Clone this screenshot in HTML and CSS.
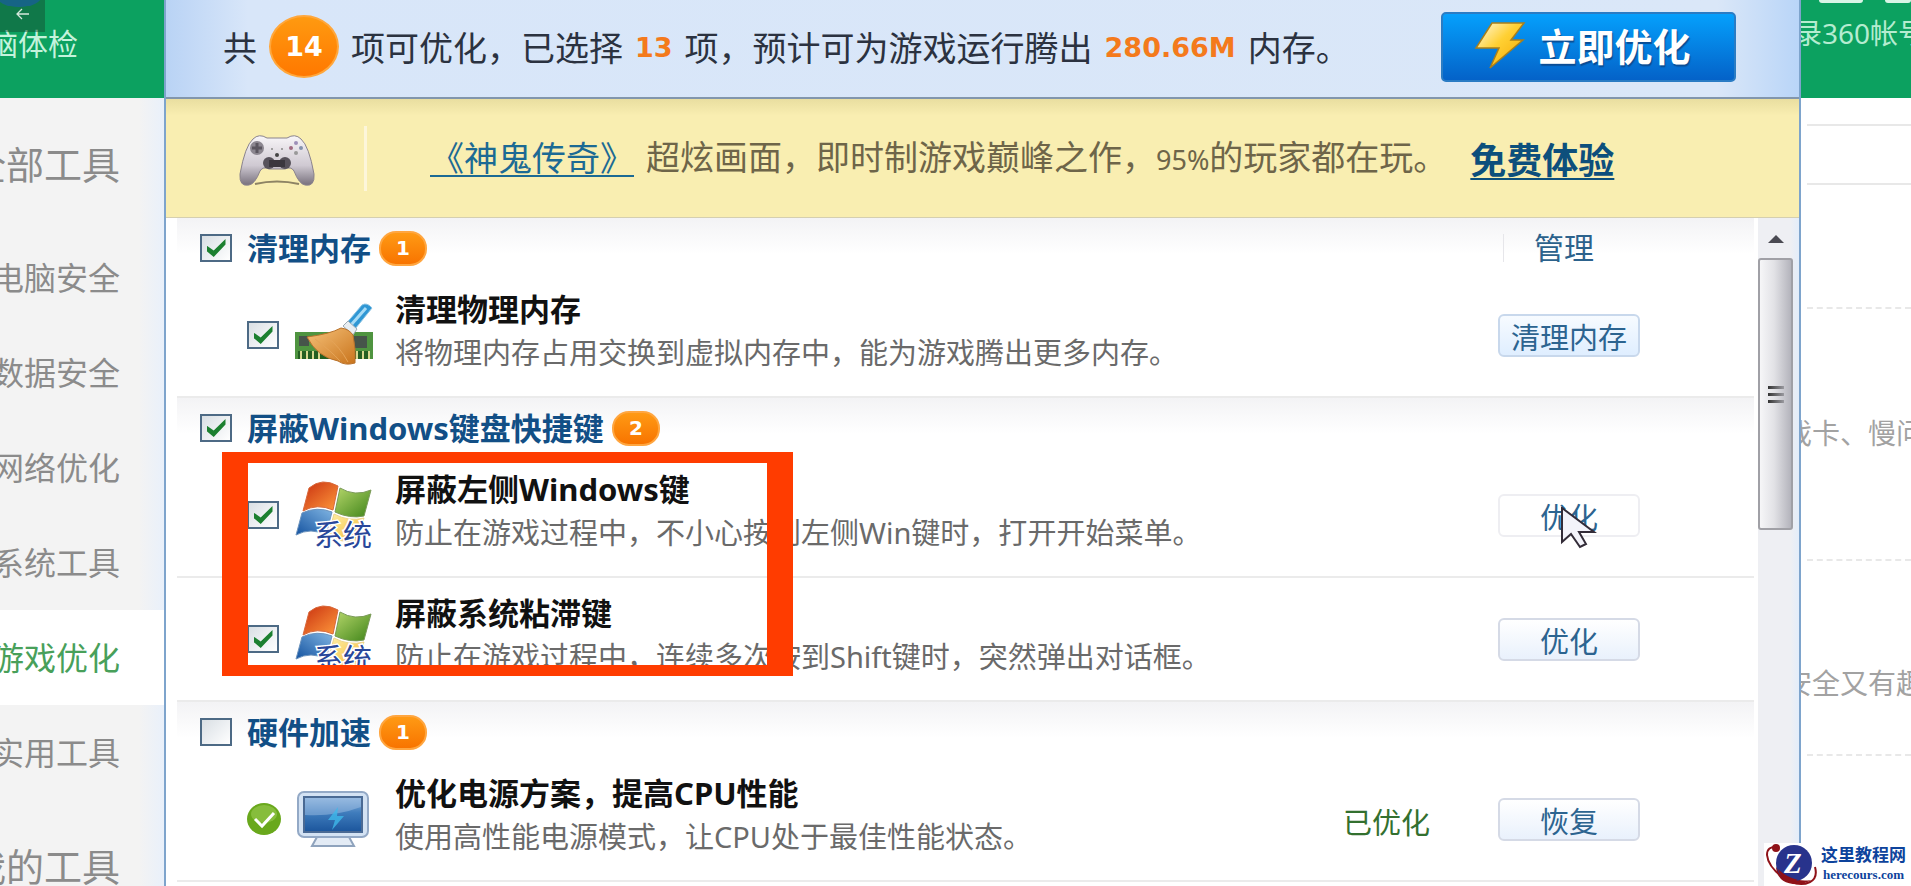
FILE: index.html
```html
<!DOCTYPE html>
<html lang="zh-CN">
<head>
    <meta charset="UTF-8">
    <meta name="viewport" content="width=device-width, initial-scale=1.0">
    <title>游戏优化</title>
    <link rel="stylesheet" href="styles.css">
</head>
<body>
    <!-- Shared icon shapes -->
    <svg class="defs" aria-hidden="true">
        <defs>
            <linearGradient id="flag-red" x1="0" y1="0" x2="1" y2="1"><stop offset="0" stop-color="#c93010"/><stop offset="1" stop-color="#ff9a3c"/></linearGradient>
            <linearGradient id="flag-green" x1="0" y1="0" x2="1" y2="1"><stop offset="0" stop-color="#b5d66a"/><stop offset="1" stop-color="#3f8419"/></linearGradient>
            <linearGradient id="flag-blue" x1="1" y1="0" x2="0" y2="1"><stop offset="0" stop-color="#7fb4e2"/><stop offset="1" stop-color="#1553a0"/></linearGradient>
            <linearGradient id="flag-yellow" x1="0" y1="0" x2="1" y2="1"><stop offset="0" stop-color="#fff0a8"/><stop offset="1" stop-color="#f2b833"/></linearGradient>
            <linearGradient id="pad" x1="0" y1="0" x2="0" y2="1"><stop offset="0" stop-color="#f8f6f8"/><stop offset=".6" stop-color="#cfc9d2"/><stop offset="1" stop-color="#77707c"/></linearGradient>
            <linearGradient id="bolt" x1="0" y1="0" x2="1" y2="1"><stop offset="0" stop-color="#fffbe8"/><stop offset=".45" stop-color="#ffd033"/><stop offset="1" stop-color="#f5a800"/></linearGradient>
            <linearGradient id="broom" x1="0" y1="0" x2="1" y2="1"><stop offset="0" stop-color="#f6c27a"/><stop offset="1" stop-color="#c9741c"/></linearGradient>
            <linearGradient id="screen" x1="0" y1="0" x2="0" y2="1"><stop offset="0" stop-color="#8db4de"/><stop offset=".45" stop-color="#3f7cbc"/><stop offset="1" stop-color="#1b559c"/></linearGradient>
        </defs>
        <symbol id="windows" viewBox="0 0 78 68">
            <path d="M14 7Q27-4 43 5L38 29Q22 22 8 30Z" fill="url(#flag-red)" stroke="#d8693c"/>
            <path d="M45 7Q60 16 76 9L69 35Q55 38 40 31Z" fill="url(#flag-green)" stroke="#7a9a58"/>
            <path d="M7 32Q22 25 37 31L31 54Q16 46 1 54Z" fill="url(#flag-blue)" stroke="#6c93bd"/>
            <path d="M39 33Q54 41 69 37L62 60Q46 62 33 55Z" fill="url(#flag-yellow)" stroke="#ecd48c"/>
            <text x="19" y="65" class="icon-text">系统</text>
        </symbol>
    </svg>

    <aside class="sidebar">
        <div class="sidebar-head">电脑体检</div>
        <nav class="tools">
            <a class="tool tool-main" href="#">全部工具</a>
            <a class="tool" href="#">电脑安全</a>
            <a class="tool" href="#">数据安全</a>
            <a class="tool" href="#">网络优化</a>
            <a class="tool" href="#">系统工具</a>
            <a class="tool active" href="#">游戏优化</a>
            <a class="tool" href="#">实用工具</a>
            <a class="tool tool-main" href="#">我的工具</a>
        </nav>
        <div class="blue-dot"></div>
        <button class="back" aria-label="返回">
            <svg width="14" height="14" viewBox="0 0 14 14" fill="none" stroke="#d5e8dc" stroke-width="1.3"><path d="M13 7H1M6 2L1 7l5 5"/></svg>
        </button>
    </aside>

    <main class="dialog">
        <header class="summary">
            <span>共</span>
            <b class="total">14</b>
            <span>项可优化，已选择</span>
            <b class="num">13</b>
            <span>项，预计可为游戏运行腾出</span>
            <b class="num">280.66M</b>
            <span>内存。</span>
            <button class="optimize">
                <svg width="52" height="48" viewBox="0 0 52 48"><path d="M18 2h32L37 19h12L16 47l9-20H2Z" fill="url(#bolt)" stroke="#a87f1c" stroke-width="1.5"/></svg>
                立即优化
            </button>
        </header>

        <div class="promo">
            <svg class="pad" width="76" height="54" viewBox="0 0 76 54">
                <path d="M14 5Q20-1 28 4H48Q56-1 62 5Q70 12 75 40Q76 53 66 51Q60 50 55 37Q52 32 46 35H30Q24 32 21 37Q16 50 10 51Q0 53 1 40Q6 12 14 5Z" fill="url(#pad)" stroke="#8a838c"/>
                <path d="M16 50Q38 45 60 50" fill="none" stroke="#8d8364" stroke-width="2"/>
                <circle cx="18" cy="14" r="7" fill="#8c8790"/><path d="M18 9v10M13 14h10" stroke="#5b565f" stroke-width="3"/>
                <circle cx="57" cy="9" r="2" fill="#9d8fb8"/><circle cx="52" cy="14" r="2" fill="#a06a80"/><circle cx="62" cy="14" r="2" fill="#8391ab"/><circle cx="57" cy="19" r="2" fill="#999"/>
                <circle cx="33" cy="15" r="1" fill="#888"/><circle cx="43" cy="15" r="1" fill="#888"/><circle cx="38" cy="21" r="2" fill="#444"/>
                <circle cx="30" cy="29" r="6" fill="#57525b"/><circle cx="46" cy="29" r="6" fill="#57525b"/><path d="M30 26h16v7H30z" fill="#3b373e"/>
            </svg>
            <p class="promo-text"><a href="#">《神鬼传奇》</a><span>超炫画面，即时制游戏巅峰之作，<span class="percent">95%</span>的玩家都在玩。</span></p>
            <a class="try" href="#">免费体验</a>
        </div>

        <div class="content">
            <div class="list">
                <section class="group">
                    <div class="group-head">
                        <input type="checkbox" id="g1" checked>
                        <label for="g1">清理内存</label>
                        <b class="count">1</b>
                        <a class="manage" href="#">管理</a>
                    </div>
                    <div class="item">
                        <input type="checkbox" id="i1" checked>
                        <svg class="icon" width="78" height="68" viewBox="0 0 78 68">
                            <path d="M0 31h78v27H0z" fill="#4f9440"/>
                            <path d="M4 35h10v10H4zM56 35h16v12H56z" fill="#46544a"/>
                            <path d="M3 50h72v8H3z" fill="#245f22"/>
                            <path d="M6 50v8M12 50v8M18 50v8M24 50v8M62 50v8M68 50v8M74 50v8" stroke="#d8d890" stroke-width="2"/>
                            <path d="M50 24L67 4Q72 1 77 7L60 28Z" fill="#2f97d4" stroke="#8cc4e4"/>
                            <path d="M56 24L71 7" stroke="#a8dcf6" stroke-width="3"/>
                            <path d="M48 25l5-5 9 8-4 6Z" fill="#e8eef2" stroke="#9ba9b4"/>
                            <path d="M12 36Q35 33 46 27Q54 28 58 34Q61 48 60 62Q50 65 43 60Q22 56 12 36Z" fill="url(#broom)" stroke="#b8722c"/>
                            <path d="M20 38Q36 50 45 60M32 36Q45 46 53 61" fill="none" stroke="#e5a458"/>
                        </svg>
                        <div class="info">
                            <label for="i1">清理物理内存</label>
                            <p>将物理内存占用交换到虚拟内存中，能为游戏腾出更多内存。</p>
                        </div>
                        <button class="action strong">清理内存</button>
                    </div>
                </section>

                <section class="group">
                    <div class="group-head">
                        <input type="checkbox" id="g2" checked>
                        <label for="g2">屏蔽Windows键盘快捷键</label>
                        <b class="count">2</b>
                    </div>
                    <div class="items">
                        <div class="item">
                            <input type="checkbox" id="i2" checked>
                            <svg class="icon" width="78" height="68"><use href="#windows"/></svg>
                            <div class="info">
                                <label for="i2">屏蔽左侧Windows键</label>
                                <p>防止在游戏过程中，不小心按到左侧Win键时，打开开始菜单。</p>
                            </div>
                            <button class="action hover">优化
                                <svg class="cursor" width="36" height="42" viewBox="0 0 36 42"><path d="M1 1v34l9-8 9 13 6-3-7-12h15Z" fill="#f3f3fa" stroke="#332c38" stroke-width="2"/></svg>
                            </button>
                        </div>
                        <div class="item">
                            <input type="checkbox" id="i3" checked>
                            <svg class="icon" width="78" height="68"><use href="#windows"/></svg>
                            <div class="info">
                                <label for="i3">屏蔽系统粘滞键</label>
                                <p>防止在游戏过程中，连续多次按到Shift键时，突然弹出对话框。</p>
                            </div>
                            <button class="action">优化</button>
                        </div>
                        <div class="highlight"></div>
                    </div>
                </section>

                <section class="group">
                    <div class="group-head">
                        <input type="checkbox" id="g3">
                        <label for="g3">硬件加速</label>
                        <b class="count">1</b>
                    </div>
                    <div class="item">
                        <svg class="done" width="34" height="32" viewBox="0 0 34 32"><ellipse cx="17" cy="16" rx="17" ry="16" fill="#69a81c"/><ellipse cx="17" cy="11" rx="13" ry="9" fill="#86bd3c"/><path d="M8 16l7 7 12-13" fill="none" stroke="#fff" stroke-width="3"/></svg>
                        <svg class="icon" width="78" height="68" viewBox="0 0 78 68">
                            <path d="M22 52h32l5 9H17Z" fill="#e3ebf5" stroke="#8fa3bd" stroke-width="2"/>
                            <rect x="3" y="7" width="70" height="45" rx="6" fill="#d3e2f3" stroke="#93a9c6" stroke-width="2"/>
                            <rect x="9" y="12" width="58" height="35" fill="url(#screen)" stroke="#4a6a94" stroke-width="2"/>
                            <path d="M10 30Q39 32 66 22V13H10Z" fill="#a9c6e6" opacity=".45"/>
                            <path d="M43 22l-10 13h7l-3 10 12-14h-7Z" fill="#3fb8ea" opacity=".8"/>
                        </svg>
                        <div class="info">
                            <span class="name">优化电源方案，提高CPU性能</span>
                            <p>使用高性能电源模式，让CPU处于最佳性能状态。</p>
                        </div>
                        <span class="state">已优化</span>
                        <button class="action">恢复</button>
                    </div>
                </section>
            </div>
            <div class="scrollbar">
                <span class="arrow"></span>
                <div class="thumb"><i></i><i></i><i></i></div>
            </div>
        </div>
    </main>

    <aside class="side">
        <div class="side-head"><span class="tab"></span><span class="tab"></span><a href="#">录360帐号</a></div>
        <div class="strip strip-top"></div>
        <div class="strip strip-bar"></div>
        <div class="strip strip-gap"></div>
        <div class="strip strip-text">戏卡、慢问题</div>
        <div class="strip strip-low">安全又有趣</div>
    </aside>

    <div class="brand">
        <svg width="56" height="43" viewBox="0 0 56 43">
            <path d="M13 4Q3 3 3 12Q4 23 18 34Q34 45 46 39Q54 35 51 24" fill="none" stroke="#8f1218" stroke-width="2"/>
            <path d="M12 24Q13 39 29 41Q40 42 47 37Q36 39 27 34Q18 30 12 24Z" fill="#8f1218"/>
            <circle cx="30" cy="20" r="18" fill="#28338c"/>
            <path d="M14 26Q22 34 34 37Q28 41 21 37Q16 33 14 26Z" fill="#8f1218"/>
            <circle cx="12" cy="5" r="4" fill="#8f1218"/>
            <text x="20" y="30" class="brand-z">Z</text>
        </svg>
        <div class="brand-name"><strong>这里教程网</strong><span>herecours.com</span></div>
    </div>
</body>
</html>
```
FILE: styles.css
```css
* {
    box-sizing: border-box;
}

body {
    display: flex;
    height: 100vh;
    margin: 0;
    overflow: hidden;
    background-color: #fff;
    font-family: "Noto Sans", "Noto Sans CJK SC", sans-serif;
    font-size: 29px;
    white-space: nowrap;
}

p {
    margin: 0;
}

button {
    font-family: inherit;
    cursor: pointer;
}

.defs {
    position: absolute;
    width: 0;
    height: 0;
}

.icon-text {
    font-size: 29px;
    fill: #28479a;
    stroke: #fff;
    stroke-width: 3px;
    paint-order: stroke;
}

/* Left tool list */
.sidebar {
    position: relative;
    flex: 0 0 164px;
    overflow: hidden;
    background: linear-gradient(to right, #f3f3f3 85%, #e9f0fa);
}

.sidebar-head {
    display: flex;
    align-items: center;
    justify-content: flex-end;
    height: 98px;
    padding: 0 86px 14px 0;
    background-color: #0ca160;
    color: #c4f3dc;
    font-size: 30px;
}

.tool {
    display: flex;
    align-items: center;
    justify-content: flex-end;
    height: 95px;
    padding: 0 44px 4px 0;
    color: #8b8b8b;
    font-size: 32px;
    text-decoration: none;
}

.tool-main {
    height: 132px;
    font-size: 38px;
}

.tool.active {
    background-color: #fff;
    color: #48a05a;
}

.back {
    position: absolute;
    top: 0;
    left: 0;
    width: 45px;
    height: 32px;
    padding: 0;
    border: 0;
    background-color: rgba(20, 80, 50, 0.5);
}

.blue-dot {
    position: absolute;
    top: -16px;
    left: -4px;
    width: 46px;
    height: 23px;
    border-radius: 50%;
    background-color: #1879d8;
}

/* Dialog */
.dialog {
    display: flex;
    flex: 1;
    flex-direction: column;
    min-width: 0;
    border: solid #7ea4cc;
    border-width: 0 2px;
    background-color: #fff;
}

.summary {
    display: flex;
    flex: none;
    align-items: center;
    gap: 12px;
    height: 99px;
    padding: 0 63px 4px 57px;
    border-bottom: 2px solid #8296ac;
    background: linear-gradient(to right, #b9d3f5, #d8e6f9 5%, #dae7f8 95%, #b9d5f8);
    color: #2b3240;
    font-size: 34px;
}

.total {
    width: 70px;
    height: 63px;
    border: 2px solid #ffa73c;
    border-radius: 50%;
    background: linear-gradient(#ff9a10, #ff7800);
    color: #fff;
    font: bold 27px/60px "DejaVu Sans", sans-serif;
    text-align: center;
}

.num {
    padding-top: 2px;
    color: #f47a1c;
    font: bold 27px "DejaVu Sans", sans-serif;
}

.optimize {
    display: flex;
    align-items: center;
    justify-content: center;
    gap: 12px;
    width: 295px;
    height: 70px;
    margin-left: auto;
    padding: 0 12px 4px 0;
    border: 2px solid #2a7cc4;
    border-radius: 5px;
    background: linear-gradient(#05a0fc, #0462c8);
    color: #fff;
    font-size: 38px;
    font-weight: bold;
    text-shadow: 1px 2px 1px #0b4d94;
}

.promo {
    display: flex;
    flex: none;
    align-items: center;
    height: 119px;
    padding-left: 73px;
    border-bottom: 1px solid #d5cfb0;
    background: linear-gradient(#e9dea0, #f9eeb1 14%);
    color: #6e6549;
    font-size: 34px;
}

.pad {
    margin: 6px 49px 0 0;
}

.promo-text {
    display: flex;
    gap: 12px;
    align-items: center;
    padding-left: 63px;
    border-left: 3px solid #fdf6da;
    line-height: 62px;
}

.promo a {
    color: #1c6a94;
    text-decoration-thickness: 2px;
    text-underline-offset: 4px;
}

.percent {
    font-size: 27px;
}

.promo .try {
    margin-left: 23px;
    color: #0d4f7c;
    font-size: 36px;
    font-weight: bold;
}

.content {
    display: flex;
    flex: 1;
    min-height: 0;
}

.list {
    flex: 1;
    min-width: 0;
    padding-left: 11px;
    overflow: hidden;
}

.group {
    background: linear-gradient(#f3f3f5, #fff 36px);
}

.group-head {
    display: flex;
    align-items: center;
    height: 56px;
    padding: 4px 160px 0 23px;
}

input[type="checkbox"] {
    display: grid;
    flex: none;
    place-items: center;
    width: 32px;
    height: 28px;
    margin: 0;
    border: 2px solid #4d6a85;
    background: linear-gradient(135deg, #d9dfe4, #fff);
    appearance: none;
}

input[type="checkbox"]:checked::before {
    width: 19px;
    height: 18px;
    background-color: #1c8030;
    clip-path: polygon(0 36%, 38% 64%, 100% 0, 100% 30%, 38% 100%, 0 66%);
    content: "";
}

.group-head label {
    margin: 0 8px 0 15px;
    color: #124f86;
    font-size: 31px;
    font-weight: bold;
    line-height: 40px;
}

.count {
    width: 48px;
    height: 35px;
    border: 2px solid #ffa640;
    border-radius: 17px;
    background: linear-gradient(#ff9a14, #f87400);
    color: #fff;
    font: bold 20px/30px "DejaVu Sans", sans-serif;
    text-align: center;
}

.manage {
    margin-left: auto;
    padding-left: 30px;
    border-left: 1px solid #e6e6ea;
    color: #2c628c;
    font-size: 30px;
    line-height: 28px;
    text-decoration: none;
}

.items {
    position: relative;
}

.item {
    display: flex;
    align-items: center;
    height: 124px;
    padding: 0 114px 0 70px;
    border-bottom: 2px solid #ebebeb;
}

.icon {
    flex: none;
    margin: 0 22px 0 16px;
    overflow: visible;
}

.done {
    margin-right: -2px;
}

.info {
    flex: 1;
    padding-bottom: 8px;
    color: #6a6a6a;
    line-height: 43px;
}

.info label,
.name {
    display: block;
    color: #111;
    font-size: 31px;
    font-weight: bold;
}

.state {
    margin-right: 68px;
    padding-top: 4px;
    color: #33702f;
}

.action {
    position: relative;
    width: 142px;
    height: 43px;
    padding: 4px 0 0;
    border: 2px solid #d5dae6;
    border-radius: 6px;
    background: linear-gradient(#fff, #e9f1fc);
    color: #2c6490;
    font-size: 29px;
    line-height: 35px;
}

.action.strong {
    border-color: #c8d8ec;
    background: linear-gradient(#f7fbff, #dfeeff);
}

.action.hover {
    border-color: #eeeef2;
    background: #fff;
}

/* Pointer drawn over the hovered button */
.cursor {
    position: absolute;
    top: 11px;
    left: 61px;
}

/* Frame around the two keyboard options */
.highlight {
    position: absolute;
    top: -2px;
    left: 45px;
    width: 571px;
    height: 224px;
    border: solid #ff3c00;
    border-width: 11px 26px;
}

.scrollbar {
    display: flex;
    flex: none;
    flex-direction: column;
    align-items: center;
    width: 41px;
    margin-left: 4px;
    padding-right: 6px;
    background: linear-gradient(to right, #eeeff3 80%, #e3edfa);
}

.arrow {
    margin: 17px 0 15px;
    border: 8px solid transparent;
    border-top: 0;
    border-bottom: 8px solid #4a4a52;
}

.thumb {
    display: flex;
    flex-direction: column;
    align-items: center;
    justify-content: center;
    gap: 4px;
    width: 35px;
    height: 272px;
    border: 2px solid #a0a0a6;
    border-radius: 3px;
    background: linear-gradient(to right, #f6f6f8, #e2e2e6 45%, #b4b4bc);
}

.thumb i {
    width: 16px;
    height: 3px;
    background: linear-gradient(to right, #333, #9a9aa0);
}

/* Right edge of the main window */
.side {
    flex: 0 0 110px;
    overflow: hidden;
    color: #a2a2a2;
    font-size: 28px;
}

.side-head {
    display: flex;
    flex-wrap: wrap;
    align-content: flex-start;
    gap: 0 22px;
    height: 98px;
    padding-left: 18px;
    background-color: #0ca160;
}

.tab {
    width: 44px;
    height: 3px;
    border-radius: 0 0 8px 8px;
    background-color: #d9f5e6;
}

.side-head .tab + .tab {
    width: 26px;
}

.side-head a {
    margin-left: -25px;
    color: #b5ecd0;
    line-height: 60px;
    text-decoration: none;
}

.strip {
    display: flex;
    align-items: center;
    margin-left: 6px;
    border-bottom: 2px dashed #e8e8e8;
    text-indent: -23px;
}

.strip-top {
    height: 28px;
    border-bottom-style: solid;
}

.strip-bar {
    height: 59px;
    border-bottom-style: solid;
}

.strip-gap {
    height: 124px;
}

.strip-text {
    height: 252px;
    padding-bottom: 4px;
}

.strip-low {
    height: 195px;
    padding-top: 48px;
}

/* Site mark in the corner */
.brand {
    position: fixed;
    right: 0;
    bottom: 0;
    display: flex;
    width: 147px;
    height: 43px;
    background-color: #fff;
    color: #0d439c;
}

.brand-z {
    font: bold italic 29px "Liberation Serif", serif;
    fill: #fff;
}

.brand-name {
    display: flex;
    flex-direction: column;
    align-items: center;
    padding: 3px 0 0 1px;
    font: bold 13px/18px "Liberation Serif", serif;
}

.brand-name strong {
    font: bold 17px/20px "Liberation Serif", "Noto Sans CJK SC", serif;
}
```
